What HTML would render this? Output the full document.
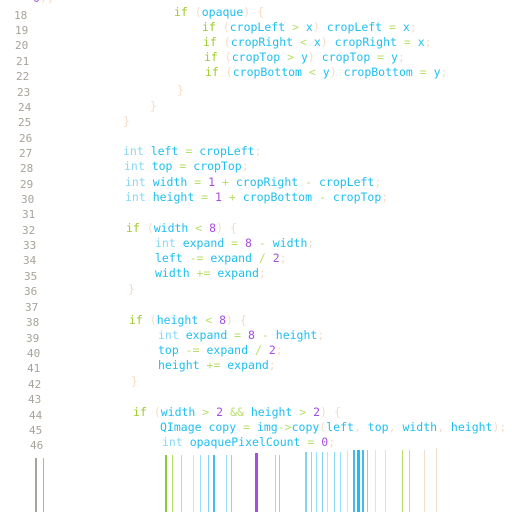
<!DOCTYPE html>
<html><head><meta charset="utf-8"><style>
html,body{margin:0;padding:0;background:#fff;width:512px;height:512px;overflow:hidden;position:relative}
.l{position:absolute;white-space:pre;font-family:"DejaVu Sans Mono","Liberation Mono",monospace;font-size:11.5px;line-height:14px;color:#1ebff0}
.ln{position:absolute;font-family:"DejaVu Sans Mono","Liberation Mono",monospace;font-size:11px;line-height:14px;color:#a8a29a}
.k{color:#9ccc2c}.t{color:#8ad8f2}.n{color:#a64ee0}.p{color:#f6dcc8}.o{color:#b8de6a}
.s{position:absolute;width:1px}
</style></head><body>
<div class="l" style="left:33px;top:-9px"><span class="n">0</span><span class="p">);</span></div>
<div class="ln" style="left:14px;top:9px">18</div>
<div class="ln" style="left:15px;top:24px">19</div>
<div class="ln" style="left:15px;top:39px">20</div>
<div class="ln" style="left:16px;top:55px">21</div>
<div class="ln" style="left:16px;top:70px">22</div>
<div class="ln" style="left:17px;top:86px">23</div>
<div class="ln" style="left:18px;top:101px">24</div>
<div class="ln" style="left:18px;top:116px">25</div>
<div class="ln" style="left:19px;top:132px">26</div>
<div class="ln" style="left:19px;top:147px">27</div>
<div class="ln" style="left:20px;top:162px">28</div>
<div class="ln" style="left:20px;top:178px">29</div>
<div class="ln" style="left:21px;top:193px">30</div>
<div class="ln" style="left:22px;top:208px">31</div>
<div class="ln" style="left:22px;top:224px">32</div>
<div class="ln" style="left:23px;top:239px">33</div>
<div class="ln" style="left:23px;top:254px">34</div>
<div class="ln" style="left:24px;top:270px">35</div>
<div class="ln" style="left:24px;top:285px">36</div>
<div class="ln" style="left:25px;top:301px">37</div>
<div class="ln" style="left:26px;top:316px">38</div>
<div class="ln" style="left:26px;top:332px">39</div>
<div class="ln" style="left:27px;top:347px">40</div>
<div class="ln" style="left:27px;top:362px">41</div>
<div class="ln" style="left:28px;top:378px">42</div>
<div class="ln" style="left:28px;top:393px">43</div>
<div class="ln" style="left:29px;top:409px">44</div>
<div class="ln" style="left:29px;top:424px">45</div>
<div class="ln" style="left:30px;top:439px">46</div>

<div class="l" style="left:174px;top:5px"><span class="k">if</span> <span class="p">(</span>opaque<span class="p">) {</span></div>
<div class="l" style="left:202px;top:20px"><span class="k">if</span> <span class="p">(</span>cropLeft <span class="o">&gt;</span> x<span class="p">)</span> cropLeft <span class="o">=</span> x<span class="p">;</span></div>
<div class="l" style="left:203px;top:35px"><span class="k">if</span> <span class="p">(</span>cropRight <span class="o">&lt;</span> x<span class="p">)</span> cropRight <span class="o">=</span> x<span class="p">;</span></div>
<div class="l" style="left:204px;top:50px"><span class="k">if</span> <span class="p">(</span>cropTop <span class="o">&gt;</span> y<span class="p">)</span> cropTop <span class="o">=</span> y<span class="p">;</span></div>
<div class="l" style="left:205px;top:65px"><span class="k">if</span> <span class="p">(</span>cropBottom <span class="o">&lt;</span> y<span class="p">)</span> cropBottom <span class="o">=</span> y<span class="p">;</span></div>
<div class="l" style="left:177px;top:83px"><span class="p">}</span></div>
<div class="l" style="left:150px;top:99px"><span class="p">}</span></div>
<div class="l" style="left:123px;top:114px"><span class="p">}</span></div>
<div class="l" style="left:123px;top:144px"><span class="t">int</span> left <span class="o">=</span> cropLeft<span class="p">;</span></div>
<div class="l" style="left:124px;top:159px"><span class="t">int</span> top <span class="o">=</span> cropTop<span class="p">;</span></div>
<div class="l" style="left:125px;top:175px"><span class="t">int</span> width <span class="o">=</span> <span class="n">1</span> <span class="o">+</span> cropRight <span class="o">-</span> cropLeft<span class="p">;</span></div>
<div class="l" style="left:125px;top:190px"><span class="t">int</span> height <span class="o">=</span> <span class="n">1</span> <span class="o">+</span> cropBottom <span class="o">-</span> cropTop<span class="p">;</span></div>
<div class="l" style="left:126px;top:221px"><span class="k">if</span> <span class="p">(</span>width <span class="o">&lt;</span> <span class="n">8</span><span class="p">) {</span></div>
<div class="l" style="left:155px;top:236px"><span class="t">int</span> expand <span class="o">=</span> <span class="n">8</span> <span class="o">-</span> width<span class="p">;</span></div>
<div class="l" style="left:155px;top:251px">left <span class="o">-=</span> expand <span class="o">/</span> <span class="n">2</span><span class="p">;</span></div>
<div class="l" style="left:155px;top:266px">width <span class="o">+=</span> expand<span class="p">;</span></div>
<div class="l" style="left:128px;top:282px"><span class="p">}</span></div>
<div class="l" style="left:129px;top:313px"><span class="k">if</span> <span class="p">(</span>height <span class="o">&lt;</span> <span class="n">8</span><span class="p">) {</span></div>
<div class="l" style="left:158px;top:328px"><span class="t">int</span> expand <span class="o">=</span> <span class="n">8</span> <span class="o">-</span> height<span class="p">;</span></div>
<div class="l" style="left:158px;top:343px">top <span class="o">-=</span> expand <span class="o">/</span> <span class="n">2</span><span class="p">;</span></div>
<div class="l" style="left:158px;top:358px">height <span class="o">+=</span> expand<span class="p">;</span></div>
<div class="l" style="left:131px;top:374px"><span class="p">}</span></div>
<div class="l" style="left:133px;top:405px"><span class="k">if</span> <span class="p">(</span>width <span class="o">&gt;</span> <span class="n">2</span> <span class="o">&amp;&amp;</span> height <span class="o">&gt;</span> <span class="n">2</span><span class="p">) {</span></div>
<div class="l" style="left:160px;top:420px">QImage copy <span class="o">=</span> img<span class="o">-&gt;</span>copy<span class="p">(</span>left<span class="p">,</span> top<span class="p">,</span> width<span class="p">,</span> height<span class="p">);</span></div>
<div class="l" style="left:162px;top:435px"><span class="t">int</span> opaquePixelCount <span class="o">=</span> <span class="n">0</span><span class="p">;</span></div>

<div class="s" style="left:35px;top:458px;height:54px;width:2px;background:#aaa59c"></div>
<div class="s" style="left:43px;top:458px;height:54px;background:#b5b0a8"></div>
<div class="s" style="left:165px;top:455px;height:57px;width:2px;background:#8cc83a"></div>
<div class="s" style="left:172px;top:455px;height:57px;background:#b8de6a"></div>
<div class="s" style="left:181px;top:455px;height:57px;background:#c6e47a"></div>
<div class="s" style="left:193px;top:455px;height:57px;background:#f3dccb"></div>
<div class="s" style="left:200px;top:455px;height:57px;background:#9ae0f6"></div>
<div class="s" style="left:208px;top:455px;height:57px;background:#7fd4f0"></div>
<div class="s" style="left:213px;top:455px;height:57px;width:2px;background:#4ab8ee"></div>
<div class="s" style="left:226px;top:455px;height:57px;background:#9ae0f6"></div>
<div class="s" style="left:231px;top:455px;height:57px;background:#8ad8f2"></div>
<div class="s" style="left:255px;top:453px;height:59px;width:3px;background:#a64ee0"></div>
<div class="s" style="left:275px;top:455px;height:57px;background:#9ae0f6"></div>
<div class="s" style="left:279px;top:455px;height:57px;background:#8ad8f2"></div>
<div class="s" style="left:305px;top:452px;height:60px;width:2px;background:#7fd4f0"></div>
<div class="s" style="left:311px;top:452px;height:60px;background:#8ad8f2"></div>
<div class="s" style="left:316px;top:452px;height:60px;background:#9ae0f6"></div>
<div class="s" style="left:322px;top:452px;height:60px;background:#7fd4f0"></div>
<div class="s" style="left:327px;top:452px;height:60px;background:#b0e8f8"></div>
<div class="s" style="left:334px;top:452px;height:60px;background:#8ad8f2"></div>
<div class="s" style="left:340px;top:452px;height:60px;background:#9ae0f6"></div>
<div class="s" style="left:347px;top:450px;height:62px;background:#f3dccb"></div>
<div class="s" style="left:353px;top:450px;height:62px;width:2px;background:#4ab8ee"></div>
<div class="s" style="left:357px;top:450px;height:62px;width:3px;background:#1ebff0"></div>
<div class="s" style="left:362px;top:450px;height:62px;width:2px;background:#4ab8ee"></div>
<div class="s" style="left:367px;top:450px;height:62px;background:#7fd4f0"></div>
<div class="s" style="left:375px;top:450px;height:62px;background:#f3dccb"></div>
<div class="s" style="left:385px;top:450px;height:62px;background:#f3dccb"></div>
<div class="s" style="left:402px;top:450px;height:62px;background:#b8de6a"></div>
<div class="s" style="left:409px;top:450px;height:62px;background:#c6e47a"></div>
<div class="s" style="left:424px;top:450px;height:62px;background:#f3dccb"></div>
<div class="s" style="left:436px;top:448px;height:64px;background:#f3dccb"></div>
</body></html>
